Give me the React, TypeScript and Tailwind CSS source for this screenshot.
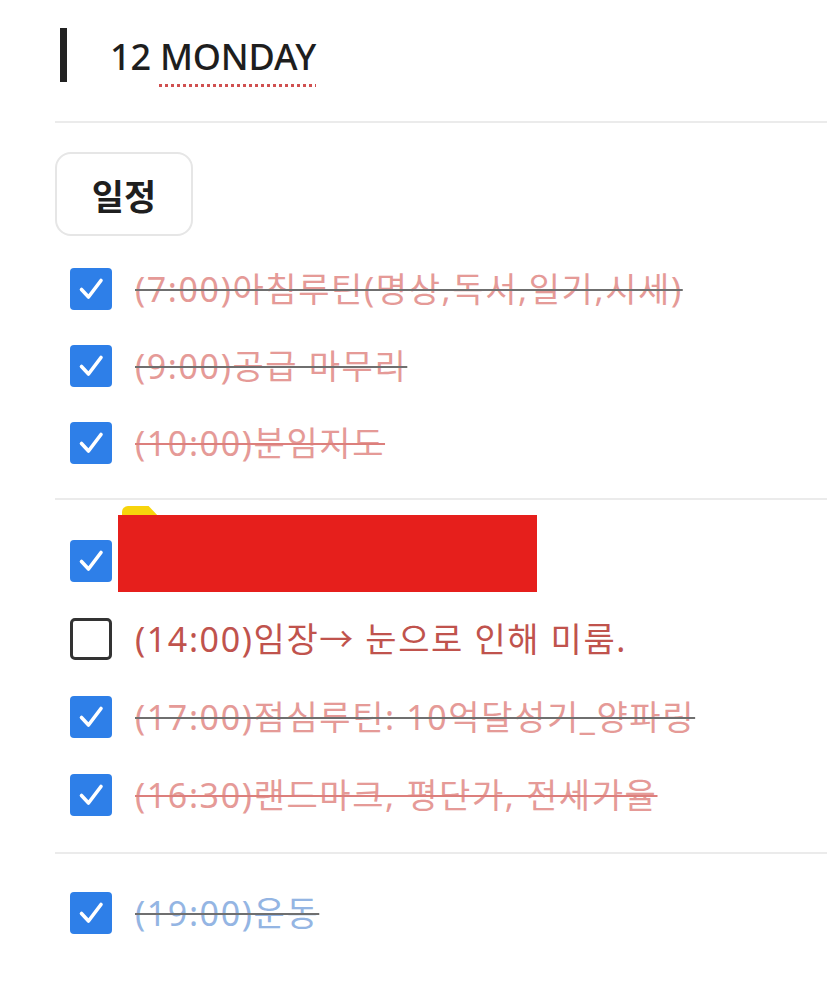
import React from "react";

type Item = {
  text: string;
  checked: boolean;
  color: string;
  line: string;
};

function Check({ checked }: { checked: boolean }) {
  if (!checked) {
    return (
      <div className="w-[42px] h-[42px] shrink-0 rounded-[5px] border-[3px] border-[#333333] bg-white" />
    );
  }
  return (
    <div className="w-[42px] h-[42px] shrink-0 rounded-[4px] bg-[#2e7fe8] flex items-center justify-center">
      <svg width="42" height="42" viewBox="0 0 42 42" fill="none">
        <path d="M11.5 21.5 L18.5 29 L31 12.5" stroke="white" strokeWidth="3.6" strokeLinecap="round" strokeLinejoin="round" />
      </svg>
    </div>
  );
}

function Row({ item, h }: { item: Item; h: string }) {
  return (
    <div className={`flex items-center ${h} pl-[15px]`}>
      <Check checked={item.checked} />
      <span
        className={`ml-[23px] text-[34px] leading-none whitespace-nowrap tracking-[1.6px] ${item.checked ? "line-through" : ""}`}
        style={{ color: item.color, textDecorationColor: item.line, textDecorationThickness: "2px" }}
      >
        {item.text}
      </span>
    </div>
  );
}

const PINK = "#e59a97";
const GRAYLINE = "#6f6f6f";
const REDLINE = "#dc7f7c";

export default function App() {
  const sec1: Item[] = [
    { text: "(7:00)아침루틴(명상,독서,일기,시세)", checked: true, color: PINK, line: GRAYLINE },
    { text: "(9:00)공급 마무리", checked: true, color: PINK, line: GRAYLINE },
    { text: "(10:00)분임지도", checked: true, color: PINK, line: REDLINE },
  ];
  const sec2: Item[] = [
    { text: "(14:00)임장→ 눈으로 인해 미룸.", checked: false, color: "#c0534d", line: "#c0534d" },
    { text: "(17:00)점심루틴: 10억달성기_양파링", checked: true, color: PINK, line: GRAYLINE },
    { text: "(16:30)랜드마크, 평단가, 전세가율", checked: true, color: PINK, line: REDLINE },
  ];
  return (
    <div
      className="w-[827px] h-[994px] bg-white overflow-hidden pl-[55px]"
      style={{ fontFamily: '"Noto Sans", "Noto Sans CJK KR", sans-serif' }}
    >
      <div className="flex items-center h-[110px] pt-[0px]">
        <div className="w-[7px] h-[54px] bg-[#222222] ml-[5px]" />
        <div className="ml-[43px] mt-[4px] text-[36px] font-medium text-[#1e1e1e] tracking-[-0.2px] leading-none">
          12{" "}
          <span className="underline decoration-dotted decoration-[#d05050] decoration-[3px] underline-offset-[14px]">
            MONDAY
          </span>
        </div>
      </div>
      <div className="h-[2px] bg-[#ebebeb] mt-[11px] w-[900px]" />
      <div className="mt-[29px] w-[138px] h-[84px] rounded-[16px] border-2 border-[#e6e6e6] flex items-center justify-center">
        <span className="text-[35px] font-bold text-[#1f1f1f] leading-none" style={{ fontFamily: '"Noto Sans CJK KR", sans-serif' }}>
          일정
        </span>
      </div>
      <div className="mt-[14px]">
        {sec1.map((it, i) => (
          <Row key={i} item={it} h="h-[77px]" />
        ))}
      </div>
      <div className="h-[2px] bg-[#ebebeb] mt-[17px] w-[900px]" />
      <div className="mt-[21px]">
        <div className="relative flex items-center h-[79px] pl-[15px]">
          <Check checked={true} />
          <div className="absolute left-[67px] top-[-15px] w-[38px] h-[12px] bg-[#f7d40c] rounded-tl-[6px] [clip-path:polygon(0_0,70%_0,100%_100%,0_100%)]" />
          <div className="absolute left-[63px] top-[-6px] w-[419px] h-[77px] bg-[#e61f1c]" />
        </div>
        {sec2.map((it, i) => (
          <Row key={i} item={it} h="h-[78px]" />
        ))}
      </div>
      <div className="h-[2px] bg-[#ebebeb] mt-[18px] w-[900px]" />
      <div className="mt-[20px]">
        <Row item={{ text: "(19:00)운동", checked: true, color: "#94b5e3", line: GRAYLINE }} h="h-[78px]" />
      </div>
    </div>
  );
}
